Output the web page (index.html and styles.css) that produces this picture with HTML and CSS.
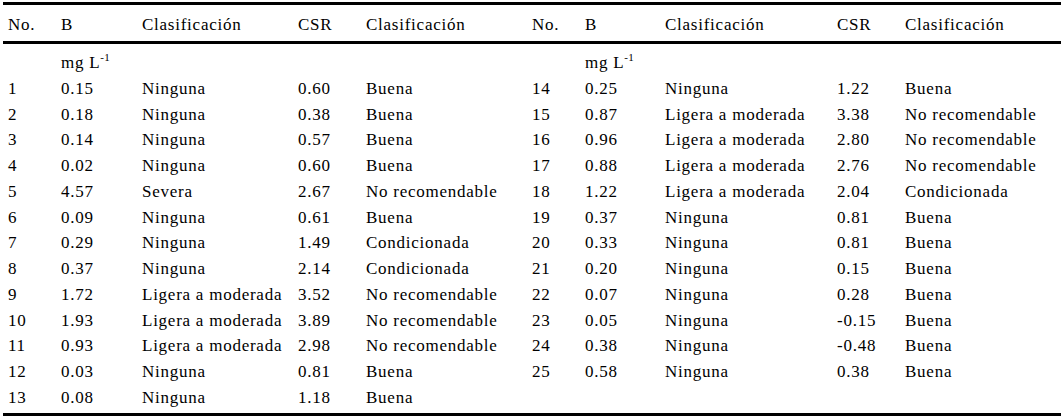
FILE: index.html
```html
<!DOCTYPE html>
<html lang="es">
<head>
<meta charset="utf-8">
<title>Tabla</title>
<link rel="stylesheet" href="styles.css">
</head>
<body>
<table class="data">
  <colgroup>
    <col class="c1"><col class="c2"><col class="c3"><col class="c4"><col class="c5">
    <col class="c6"><col class="c7"><col class="c8"><col class="c9"><col class="c10">
  </colgroup>
  <thead>
    <tr>
      <th>No.</th><th>B</th><th>Clasificación</th><th>CSR</th><th>Clasificación</th>
      <th>No.</th><th>B</th><th>Clasificación</th><th>CSR</th><th>Clasificación</th>
    </tr>
  </thead>
  <tbody>
    <tr class="units">
      <td></td><td>mg L<sup>-1</sup></td><td></td><td></td><td></td>
      <td></td><td>mg L<sup>-1</sup></td><td></td><td></td><td></td>
    </tr>
    <tr><td>1</td><td>0.15</td><td>Ninguna</td><td>0.60</td><td>Buena</td><td>14</td><td>0.25</td><td>Ninguna</td><td>1.22</td><td>Buena</td></tr>
    <tr><td>2</td><td>0.18</td><td>Ninguna</td><td>0.38</td><td>Buena</td><td>15</td><td>0.87</td><td>Ligera a moderada</td><td>3.38</td><td>No recomendable</td></tr>
    <tr><td>3</td><td>0.14</td><td>Ninguna</td><td>0.57</td><td>Buena</td><td>16</td><td>0.96</td><td>Ligera a moderada</td><td>2.80</td><td>No recomendable</td></tr>
    <tr><td>4</td><td>0.02</td><td>Ninguna</td><td>0.60</td><td>Buena</td><td>17</td><td>0.88</td><td>Ligera a moderada</td><td>2.76</td><td>No recomendable</td></tr>
    <tr><td>5</td><td>4.57</td><td>Severa</td><td>2.67</td><td>No recomendable</td><td>18</td><td>1.22</td><td>Ligera a moderada</td><td>2.04</td><td>Condicionada</td></tr>
    <tr><td>6</td><td>0.09</td><td>Ninguna</td><td>0.61</td><td>Buena</td><td>19</td><td>0.37</td><td>Ninguna</td><td>0.81</td><td>Buena</td></tr>
    <tr><td>7</td><td>0.29</td><td>Ninguna</td><td>1.49</td><td>Condicionada</td><td>20</td><td>0.33</td><td>Ninguna</td><td>0.81</td><td>Buena</td></tr>
    <tr><td>8</td><td>0.37</td><td>Ninguna</td><td>2.14</td><td>Condicionada</td><td>21</td><td>0.20</td><td>Ninguna</td><td>0.15</td><td>Buena</td></tr>
    <tr><td>9</td><td>1.72</td><td>Ligera a moderada</td><td>3.52</td><td>No recomendable</td><td>22</td><td>0.07</td><td>Ninguna</td><td>0.28</td><td>Buena</td></tr>
    <tr><td>10</td><td>1.93</td><td>Ligera a moderada</td><td>3.89</td><td>No recomendable</td><td>23</td><td>0.05</td><td>Ninguna</td><td>-0.15</td><td>Buena</td></tr>
    <tr><td>11</td><td>0.93</td><td>Ligera a moderada</td><td>2.98</td><td>No recomendable</td><td>24</td><td>0.38</td><td>Ninguna</td><td>-0.48</td><td>Buena</td></tr>
    <tr><td>12</td><td>0.03</td><td>Ninguna</td><td>0.81</td><td>Buena</td><td>25</td><td>0.58</td><td>Ninguna</td><td>0.38</td><td>Buena</td></tr>
    <tr class="last"><td>13</td><td>0.08</td><td>Ninguna</td><td>1.18</td><td>Buena</td><td></td><td></td><td></td><td></td><td></td></tr>
  </tbody>
</table>
</body>
</html>
```
FILE: styles.css
```css
html, body {
  margin: 0;
  padding: 0;
  background: #ffffff;
}

body {
  padding: 2px 2px 0 3px;
  font-family: "Liberation Serif", serif;
  font-size: 17px;
  color: #000;
}

.data {
  width: 1058px;
  border-collapse: collapse;
  table-layout: fixed;
}

.c1 { width: 53px; }
.c2 { width: 81px; }
.c3 { width: 156px; }
.c4 { width: 68px; }
.c5 { width: 166px; }
.c6 { width: 53px; }
.c7 { width: 80px; }
.c8 { width: 172px; }
.c9 { width: 68px; }
.c10 { width: 161px; }

.data th,
.data td {
  font-family: "Liberation Serif", serif;
  font-size: 17px;
  letter-spacing: 0.75px;
  padding: 0 0 0 5px;
  text-align: left;
  font-weight: normal;
  white-space: nowrap;
  line-height: 25.75px;
  height: 25.75px;
  vertical-align: top;
}

.data thead tr {
  border-top: 3px solid #000;
  border-bottom: 3px solid #000;
}

.data thead th {
  padding-top: 6.5px;
  padding-bottom: 3.75px;
}

.data .units td {
  padding-top: 6px;
}

.data sup {
  font-size: 11px;
  line-height: 0;
  vertical-align: 7px;
  letter-spacing: 0.3px;
}

.data .last td {
  padding-bottom: 2.5px;
}

.data tbody {
  border-bottom: 3px solid #000;
}
```
